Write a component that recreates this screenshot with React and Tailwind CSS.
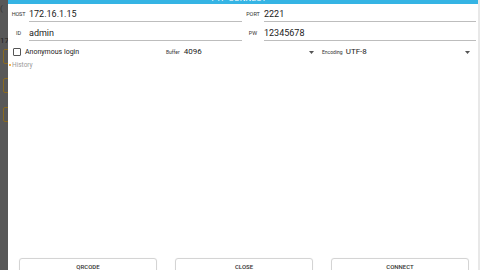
import React from "react";

function Arrow() {
  return (
    <svg width="5" height="3" viewBox="0 0 5 3" className="block">
      <path d="M0 0 L5 0 L2.5 3 Z" fill="#555" />
    </svg>
  );
}

function Field({ label, value, labelW }) {
  return (
    <div className="flex items-end h-[19px]">
      <div className={`${labelW} flex justify-center text-[5.5px] text-[#333] pb-[4px] tracking-tight`}>{label}</div>
      <div className="flex-1 h-full flex items-end border-b border-[#bdbdbd] pb-[2px] text-[9px] leading-[10px] text-[#222]">
        {value}
      </div>
    </div>
  );
}

export default function App() {
  return (
    <div className="w-[480px] h-[270px] overflow-hidden flex bg-[#5a5a5a]" style={{ fontFamily: "Roboto, 'Noto Sans', sans-serif" }}>
      <div className="w-[8px] h-full relative overflow-hidden bg-[#585858]">
        <div className="absolute left-[0px] top-[5px] text-[8px] text-[#333] leading-none">(</div>
        <div className="absolute left-[0px] top-[37px] text-[8px] text-[#222] leading-none">17</div>
        <div className="absolute left-[3px] top-[49px] w-[10px] h-[15px] border border-[#8a6a20] rounded-[2px]" />
        <div className="absolute left-[3px] top-[78px] w-[10px] h-[15px] border border-[#8a6a20] rounded-[2px]" />
        <div className="absolute left-[3px] top-[107px] w-[10px] h-[15px] border border-[#8a6a20] rounded-[2px]" />
      </div>
      <div className="w-[470px] h-full bg-white flex flex-col overflow-hidden">
        <div className="h-[4px] shrink-0 bg-[#35b4e4] overflow-hidden flex justify-center">
          <div className="text-[8px] leading-none text-white mt-[-5px] ml-[-8px] tracking-wide">FTP CONNECT</div>
        </div>
        <div className="w-[468px] flex flex-col">
          <div className="grid grid-cols-2 mt-[-1px]">
            <Field label="HOST" value="172.16.1.15" labelW="w-[21px]" />
            <div className="flex items-end h-[19px]">
              <div className="w-[22px] flex justify-center text-[5.5px] text-[#333] pb-[4px]">PORT</div>
              <div className="flex-1 h-full flex items-end border-b border-[#bdbdbd] pb-[2px] text-[9px] leading-[10px] text-[#222]">2221</div>
            </div>
          </div>
          <div className="grid grid-cols-2">
            <Field label="ID" value="admin" labelW="w-[21px]" />
            <div className="flex items-end h-[19px]">
              <div className="w-[22px] flex justify-center text-[5.5px] text-[#333] pb-[4px]">PW</div>
              <div className="flex-1 h-full flex items-end border-b border-[#bdbdbd] pb-[2px] text-[9px] leading-[10px] text-[#222]">12345678</div>
            </div>
          </div>
          <div className="grid grid-cols-3 mt-[6px] h-[10px] items-center">
            <div className="flex items-center pl-[5px]">
              <div className="w-[8px] h-[8px] border border-[#555] rounded-[1px]" />
              <span className="ml-[4px] text-[7px] text-[#222] leading-none">Anonymous login</span>
            </div>
            <div className="flex items-center pl-[2px] pr-[6px]">
              <span className="text-[5px] text-[#333] leading-none">Buffer</span>
              <span className="ml-[4px] text-[8px] text-[#222] leading-none">4096</span>
              <div className="flex-1" />
              <Arrow />
            </div>
            <div className="flex items-center pl-[2px] pr-[6px]">
              <span className="text-[5px] text-[#333] leading-none">Encoding</span>
              <span className="ml-[3px] text-[8px] text-[#222] leading-none">UTF-8</span>
              <div className="flex-1" />
              <Arrow />
            </div>
          </div>
          <div className="flex items-center mt-[4px] pl-[1px] h-[8px]">
            <div className="w-[2px] h-[2px] rounded-full bg-[#f0a020]" />
            <span className="ml-[1px] text-[6.5px] text-[#999] leading-none">History</span>
          </div>
        </div>
        <div className="flex-1" />
        <div className="w-[468px] grid grid-cols-3 shrink-0 mb-[-8px]">
          {["QRCODE", "CLOSE", "CONNECT"].map((t) => (
            <div key={t} className="pl-[11px] pr-[7px]">
              <div className="h-[20px] border border-[#d4d4d4] rounded-[3px] flex justify-center pt-[5px] text-[6px] font-medium text-[#333] leading-none shadow-[0_0_1px_rgba(0,0,0,0.1)]">
                {t}
              </div>
            </div>
          ))}
        </div>
      </div>
      <div className="w-[2px] h-full bg-[#e8e8e8]" />
    </div>
  );
}
